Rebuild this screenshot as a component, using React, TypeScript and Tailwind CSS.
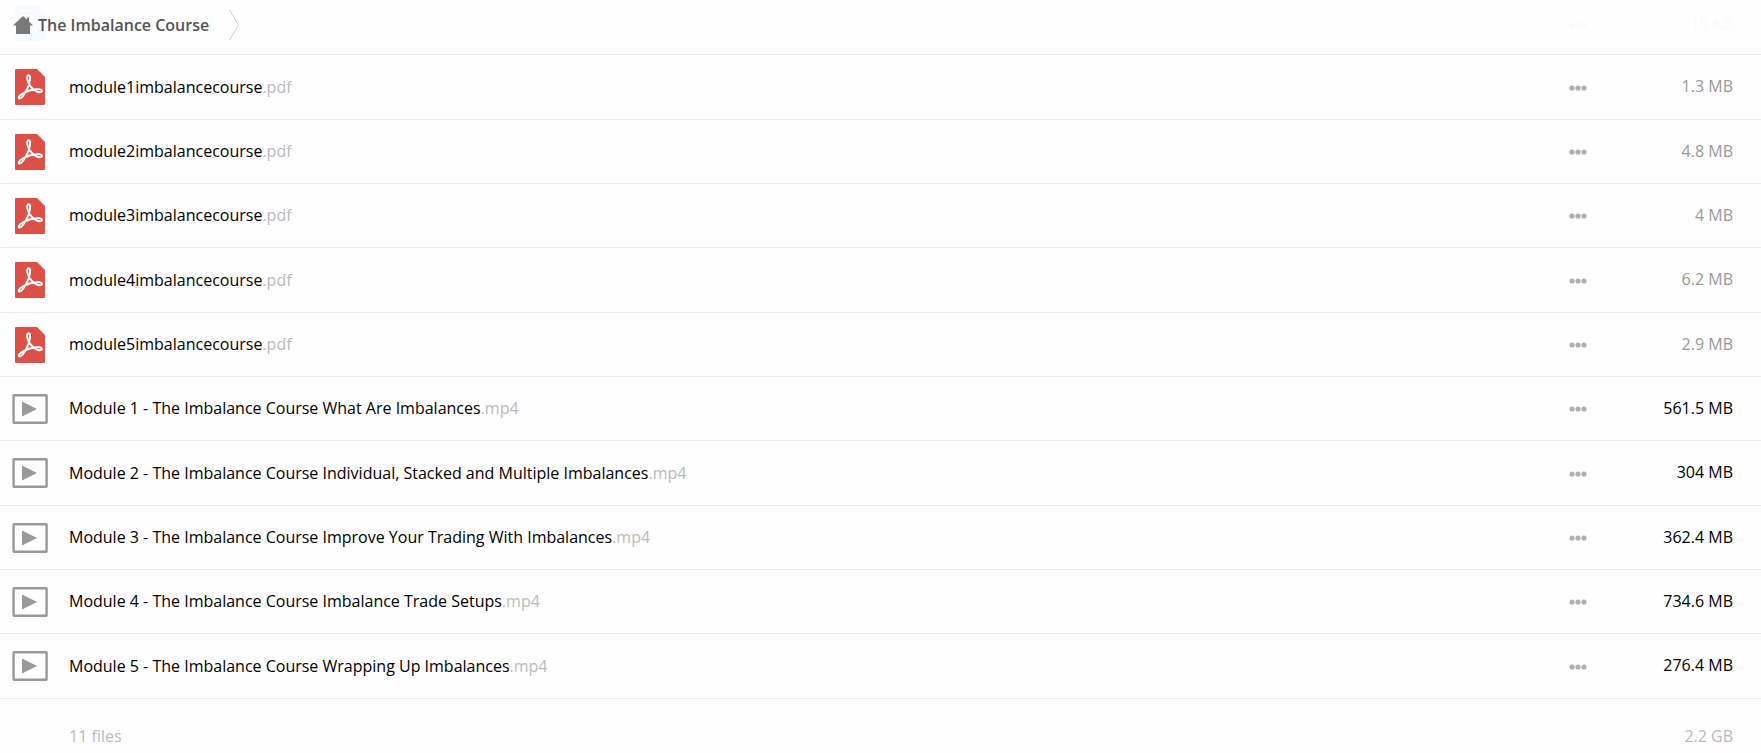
interface FileEntry {
    name: string;
    ext: string;
    size: string;
    type: 'pdf' | 'video';
}

const files: FileEntry[] = [
    { name: 'module1imbalancecourse', ext: '.pdf', size: '1.3 MB', type: 'pdf' },
    { name: 'module2imbalancecourse', ext: '.pdf', size: '4.8 MB', type: 'pdf' },
    { name: 'module3imbalancecourse', ext: '.pdf', size: '4 MB', type: 'pdf' },
    { name: 'module4imbalancecourse', ext: '.pdf', size: '6.2 MB', type: 'pdf' },
    { name: 'module5imbalancecourse', ext: '.pdf', size: '2.9 MB', type: 'pdf' },
    { name: 'Module 1 - The Imbalance Course What Are Imbalances', ext: '.mp4', size: '561.5 MB', type: 'video' },
    { name: 'Module 2 - The Imbalance Course Individual, Stacked and Multiple Imbalances', ext: '.mp4', size: '304 MB', type: 'video' },
    { name: 'Module 3 - The Imbalance Course Improve Your Trading With Imbalances', ext: '.mp4', size: '362.4 MB', type: 'video' },
    { name: 'Module 4 - The Imbalance Course Imbalance Trade Setups', ext: '.mp4', size: '734.6 MB', type: 'video' },
    { name: 'Module 5 - The Imbalance Course Wrapping Up Imbalances', ext: '.mp4', size: '276.4 MB', type: 'video' },
];

function PdfIcon() {
    return (
        <svg className="mx-auto block h-9 w-[30px]" viewBox="0 0 30 36" aria-hidden="true">
            <path d="M1 0h21l8 8v27a1 1 0 0 1-1 1H1a1 1 0 0 1-1-1V1a1 1 0 0 1 1-1z" fill="#dd5047" />
            <path
                d="M13.800 6.300c-1.500 0-1.900 1.700-1.500 4 .8 4.300 4 8.700 8 11.300 2.300 1.500 4.900 2.200 6.100 1.200 1.100-1 .2-2.300-1.900-2.500-4.800-.5-10.700.9-15.500 3.500-3.500 1.900-5.700 4-5.200 5.200.6 1.300 2.700.2 4.700-2.700 3-4.400 5.900-11.200 6.500-16 .3-2.300 0-4-1.200-4z"
                fill="none"
                stroke="#fff"
                strokeWidth="2"
                strokeLinejoin="round"
            />
        </svg>
    );
}

function VideoIcon() {
    return (
        <svg className="ml-3 block h-[30px] w-[36px]" viewBox="0 0 36 30" aria-hidden="true">
            <rect x="1.600" y="1.200" width="33" height="27.600" rx="0.500" fill="none" stroke="#999" strokeWidth="2.400" />
            <path d="M10 7.500v15L25 15z" fill="#999" />
        </svg>
    );
}

function Dots() {
    return (
        <svg className="mx-auto block h-[6px] w-[18px]" viewBox="0 0 18 6" fill="currentColor" aria-hidden="true">
            <circle cx="3" cy="3" r="2.600" />
            <circle cx="9" cy="3" r="2.600" />
            <circle cx="15" cy="3" r="2.600" />
        </svg>
    );
}

function Breadcrumb() {
    return (
        <header className="relative h-[55px] border-b border-[#ebebeb]">
            {/* Row scrolled under the translucent header */}
            <div className="absolute inset-0 flex items-center text-[#fafafa]" aria-hidden="true">
                <div className="w-[60px] shrink-0">
                    <svg className="mx-auto mb-2 block h-9 w-[30px]" viewBox="0 0 30 36">
                        <path d="M0 0h22l8 8v28H0z" fill="#f6fbfe" />
                        <path d="M5 6h11M5 11h15M5 16h20" stroke="#fff" strokeWidth="2" />
                    </svg>
                </div>
                <div className="mb-3 grow pl-[9px]">Content.docx</div>
                <div className="mb-1 w-[62px] shrink-0">
                    <Dots />
                </div>
                <div className="mb-2 w-[152px] shrink-0 pr-7 text-right">15 KB</div>
            </div>
            <nav className="relative flex h-full items-center pb-1 pl-[13px]" aria-label="Breadcrumb">
                <a href="#" className="flex items-center gap-[5px] font-semibold text-[#555]">
                    <svg className="h-[18px] w-5" viewBox="0 0 20 18" fill="#7a7a7a" aria-hidden="true">
                        <path d="M10 0l4 3.600V1.500h2v4L20 9.500h-3V18H3V9.500H0z" />
                    </svg>
                    The Imbalance Course
                </a>
                <svg className="ml-5 h-[30px] w-[10px]" viewBox="0 0 10 30" fill="none" stroke="#d0d0d0" aria-hidden="true">
                    <path d="M0.500 0L9.500 15L0.500 30" />
                </svg>
            </nav>
        </header>
    );
}

export default function App() {
    return (
        <div className="min-h-screen bg-[#fefefe] font-['Open_Sans',sans-serif] text-base leading-6 text-black">
            <Breadcrumb />
            <table className="w-full table-fixed border-separate border-spacing-0">
                <colgroup>
                    <col className="w-[60px]" />
                    <col />
                    <col className="w-[62px]" />
                    <col className="w-[152px]" />
                </colgroup>
                <tbody>
                    {files.map((file) => (
                        <tr key={file.name} className="h-16 nth-[3n+1]:h-[65px] *:border-b *:border-[#ebebeb]">
                            <td className="p-0">{file.type === 'pdf' ? <PdfIcon /> : <VideoIcon />}</td>
                            <td className="p-0 pb-px">
                                <a href="#" className="ml-[9px]">
                                    {file.name}
                                    <span className="text-[#bbb]">{file.ext}</span>
                                </a>
                            </td>
                            <td className="p-0 pt-px">
                                <button type="button" aria-label="More actions" className="block w-full py-2 text-[#b0b0b0]">
                                    <Dots />
                                </button>
                            </td>
                            <td className={file.type === 'pdf' ? 'p-0 pb-0.5 text-right text-[#999]' : 'p-0 pb-0.5 text-right'}>
                                <span className="mr-7">{file.size}</span>
                            </td>
                        </tr>
                    ))}
                </tbody>
            </table>
            <footer className="flex justify-between pt-[25px] pr-7 pl-[69px] text-[#bbb]">
                <span>11 files</span>
                <span>2.2 GB</span>
            </footer>
        </div>
    );
}
